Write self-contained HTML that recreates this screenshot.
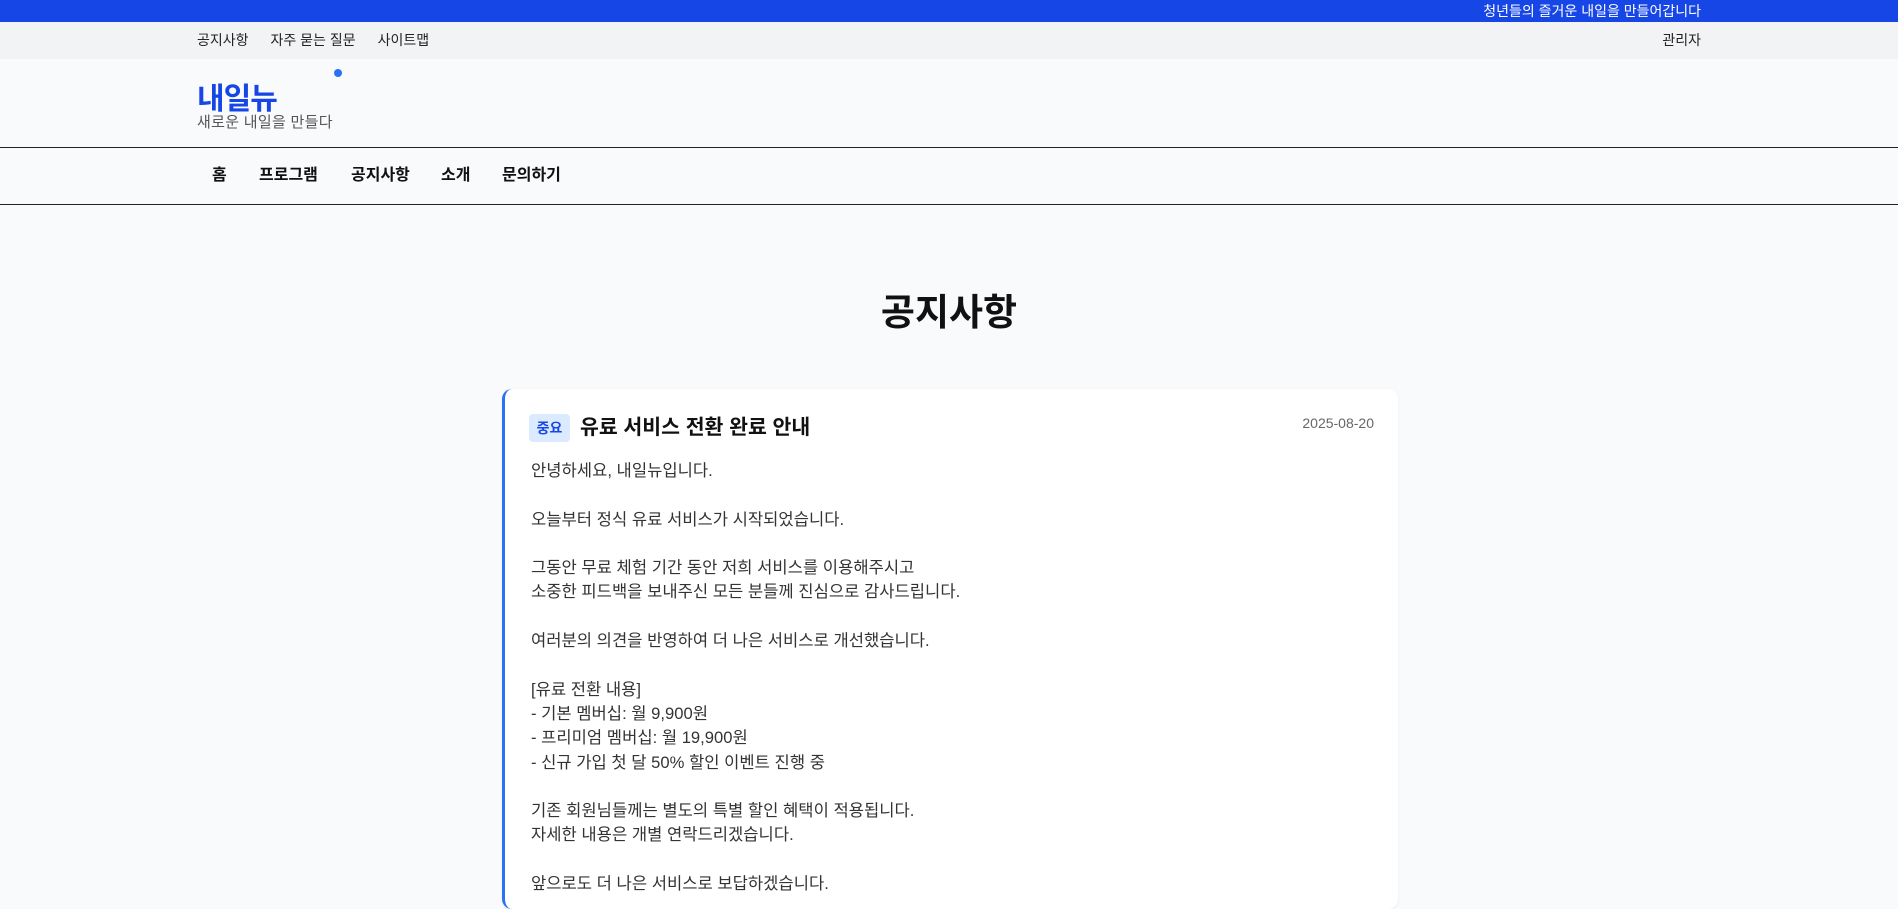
<!DOCTYPE html>
<html><head><meta charset="utf-8"><style>
*{margin:0;padding:0;box-sizing:border-box}
body{width:1898px;height:889px;overflow:hidden;background:#f8fafc;font-family:"Liberation Sans","Noto Sans CJK KR",sans-serif;color:#111}
.top{height:22px;background:#1746e6;color:#fff;font-size:14px;line-height:22px;text-align:right;padding-right:197px}
.util{height:37px;background:#f1f3f5;font-size:14px;line-height:37px;position:relative;color:#222}
.util .l{position:absolute;left:197px}
.util .l span{margin-right:22px}
.util .r{position:absolute;right:197px}
.logo{height:88px;position:relative}
.logo .n{position:absolute;left:197px;top:15px;font-size:30px;font-weight:700;color:#1746e6;letter-spacing:-1px}
.logo .s{position:absolute;left:197px;top:52px;font-size:15px;color:#555;letter-spacing:.3px}
.logo .d{position:absolute;left:334px;top:10px;width:8px;height:8px;border-radius:50%;background:#2a72f5}
.nav{height:58px;border-top:1.5px solid #222;border-bottom:1.5px solid #222;font-size:16px;font-weight:600;line-height:55px;position:relative}
.nav span{position:absolute}
h1{position:absolute;left:0;width:1898px;top:282px;text-align:center;font-size:37px;font-weight:700}
.card{position:absolute;left:502px;top:389px;width:896px;height:520px;background:#fff;border-radius:10px;border-left:3px solid #2a72f5;box-shadow:0 1px 3px rgba(0,0,0,.06)}
.badge{position:absolute;left:24px;top:25px;width:41px;height:28px;background:#dbeafe;color:#1746e6;font-size:14px;font-weight:700;border-radius:4px;text-align:center;line-height:28px}
.title{position:absolute;left:75px;top:25px;font-size:20.5px;font-weight:700;line-height:28px}
.date{position:absolute;right:24px;top:26px;font-size:14px;color:#666}
.body{position:absolute;left:26px;top:70px;font-size:16.6px;line-height:24.3px;color:#333;white-space:pre}
</style></head><body>
<div class="top">청년들의 즐거운 내일을 만들어갑니다</div>
<div class="util"><div class="l"><span>공지사항</span><span>자주 묻는 질문</span><span>사이트맵</span></div><div class="r">관리자</div></div>
<div class="logo"><div class="n">내일뉴</div><div class="d"></div><div class="s">새로운 내일을 만들다</div></div>
<div class="nav"><span style="left:212px">홈</span><span style="left:259px">프로그램</span><span style="left:351px">공지사항</span><span style="left:441px">소개</span><span style="left:502px">문의하기</span></div>
<h1>공지사항</h1>
<div class="card">
<div class="badge">중요</div><div class="title">유료 서비스 전환 완료 안내</div><div class="date">2025-08-20</div>
<div class="body">안녕하세요, 내일뉴입니다.

오늘부터 정식 유료 서비스가 시작되었습니다.

그동안 무료 체험 기간 동안 저희 서비스를 이용해주시고
소중한 피드백을 보내주신 모든 분들께 진심으로 감사드립니다.

여러분의 의견을 반영하여 더 나은 서비스로 개선했습니다.

[유료 전환 내용]
- 기본 멤버십: 월 9,900원
- 프리미엄 멤버십: 월 19,900원
- 신규 가입 첫 달 50% 할인 이벤트 진행 중

기존 회원님들께는 별도의 특별 할인 혜택이 적용됩니다.
자세한 내용은 개별 연락드리겠습니다.

앞으로도 더 나은 서비스로 보답하겠습니다.</div>
</div>
</body></html>
